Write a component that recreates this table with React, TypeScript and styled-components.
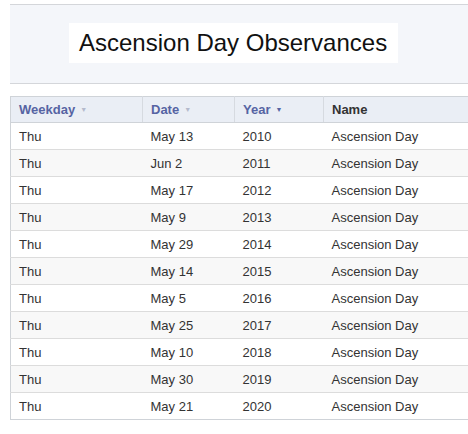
import React from "react";
import styled, { createGlobalStyle } from "styled-components";

const Global = createGlobalStyle`
  html, body { margin: 0; padding: 0; background: #fff; overflow: hidden; }
  body { font-family: Arial, "Liberation Sans", sans-serif; }
`;

const Page = styled.div`
  width: 468px;
  height: 434px;
  padding: 4px 0 0 10px;
  box-sizing: border-box;
  overflow: hidden;
`;

const Banner = styled.div`
  width: 470px;
  height: 80px;
  box-sizing: border-box;
  background: #f4f6fa;
  border-top: 1px solid #d4d6da;
  border-bottom: 1px solid #d4d6da;
  display: flex;
  align-items: flex-start;
  padding: 18px 0 0 59px;
`;

const Title = styled.h1`
  margin: 0;
  background: #fff;
  height: 40px;
  padding: 0 11px 0 10px;
  display: flex;
  align-items: center;
  font-family: Arial, "Liberation Sans", sans-serif;
  font-weight: normal;
  font-size: 24px;
  color: #111;
`;

const Table = styled.table`
  margin-top: 12px;
  width: 480px;
  border-collapse: collapse;
  table-layout: fixed;
  border-left: 1px solid #cfd3d8;
  border-bottom: 1px solid #cfd3d8;
  font-family: Arial, "Liberation Sans", sans-serif;
  font-size: 13px;
`;

const Th = styled.th<{ $w: number; $dark?: boolean }>`
  width: ${(p) => p.$w}px;
  height: 26px;
  box-sizing: border-box;
  padding: 0 8px;
  text-align: left;
  background: #eaeef5;
  border-top: 1px solid #cfd3d8;
  border-bottom: 1px solid #cfd3d8;
  border-right: 1px solid #d6dae0;
  color: ${(p) => (p.$dark ? "#333" : "#5664a3")};
  font-weight: bold;
  font-size: 13px;
`;

const Arrow = styled.span<{ $active?: boolean }>`
  font-size: 7px;
  margin-left: 5px;
  vertical-align: 2px;
  color: ${(p) => (p.$active ? "#5664a3" : "#b4bacc")};
`;

const Tr = styled.tr<{ $alt: boolean }>`
  background: ${(p) => (p.$alt ? "#f8f8f8" : "#fff")};
`;

const Td = styled.td`
  height: 27px;
  box-sizing: border-box;
  padding: 0 8px;
  color: #333;
  border-top: 1px solid #dcdcdc;
  white-space: nowrap;
`;

const rows: [string, string][] = [
  ["May 13", "2010"],
  ["Jun 2", "2011"],
  ["May 17", "2012"],
  ["May 9", "2013"],
  ["May 29", "2014"],
  ["May 14", "2015"],
  ["May 5", "2016"],
  ["May 25", "2017"],
  ["May 10", "2018"],
  ["May 30", "2019"],
  ["May 21", "2020"],
];

export default function App() {
  return (
    <>
      <Global />
      <Page>
        <Banner>
          <Title>Ascension Day Observances</Title>
        </Banner>
        <Table>
          <thead>
            <tr>
              <Th $w={132}>
                Weekday<Arrow>▼</Arrow>
              </Th>
              <Th $w={92}>
                Date<Arrow>▼</Arrow>
              </Th>
              <Th $w={89}>
                Year<Arrow $active>▼</Arrow>
              </Th>
              <Th $w={167} $dark>
                Name
              </Th>
            </tr>
          </thead>
          <tbody>
            {rows.map(([d, y], i) => (
              <Tr key={y} $alt={i % 2 === 1}>
                <Td>Thu</Td>
                <Td>{d}</Td>
                <Td>{y}</Td>
                <Td>Ascension Day</Td>
              </Tr>
            ))}
          </tbody>
        </Table>
      </Page>
    </>
  );
}
